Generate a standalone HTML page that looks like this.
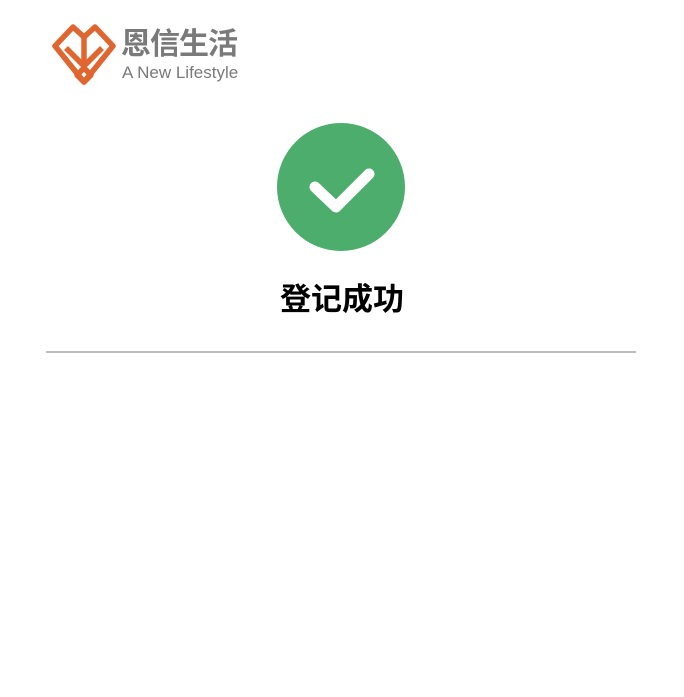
<!DOCTYPE html>
<html><head><meta charset="utf-8"><style>
html,body{margin:0;padding:0;background:#fff;width:684px;height:697px;overflow:hidden;position:relative}
.t{position:absolute;font-family:"Liberation Sans","Noto Sans CJK SC",sans-serif}
</style></head><body>
<svg style="position:absolute;left:0;top:0" width="684" height="697">
<g fill="none" stroke="#e0652f" stroke-width="5.5" stroke-linejoin="round">
<path d="M84,37 L73,27 L55,46 L84,82 L113,46 L95,27 Z"/>
<path d="M84,37 L84,66"/>
<path d="M66,48 L84,66 L102,48"/>
<path d="M84,68 L91,75 L84,82 L77,75 Z"/>
</g>
<circle cx="341" cy="187" r="64" fill="#4dad6c"/>
<path d="M315,187 L336,207 L369,174" fill="none" stroke="#fff" stroke-width="11" stroke-linecap="round" stroke-linejoin="round"/>
<rect x="46" y="351" width="590" height="2" fill="#bdbdbd"/>
</svg>
<div class="t" style="left:121px;top:28px;font-size:30px;color:#7a7a7a;font-weight:bold;letter-spacing:-1px;line-height:34px">恩信生活</div>
<div class="t" style="left:122px;top:63px;font-size:17px;color:#7a7a7a;line-height:20px">A New Lifestyle</div>
<div class="t" style="left:0;width:684px;text-align:center;top:281px;font-size:31px;font-weight:bold;color:#000;line-height:38px">登记成功</div>
</body></html>
